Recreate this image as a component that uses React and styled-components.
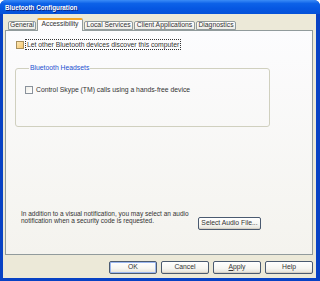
import React from 'react'
import styled, { createGlobalStyle } from 'styled-components'

const GlobalStyle = createGlobalStyle`
  html, body {
    margin: 0;
    padding: 0;
    background: #ffffff;
  }
  body {
    font-family: Tahoma, "Liberation Sans", Arial, sans-serif;
  }
`

const Window = styled.div`
  width: 320px;
  height: 281px;
  display: flex;
  flex-direction: column;
  background: #0842c4;
  border-radius: 6px 6px 0 0;
  overflow: hidden;
`

const TitleBar = styled.div`
  height: 14px;
  flex: none;
  display: flex;
  align-items: center;
  padding-left: 5px;
  background: linear-gradient(#3b8cf7 0%, #0d62e8 25%, #0657e2 60%, #0552d8 100%);
  color: #ffffff;
  font-family: "Liberation Sans", Arial, sans-serif;
  font-weight: bold;
  font-size: 6.3px;
  text-shadow: 1px 1px 0 #0a1f7a;
`

const Client = styled.div`
  flex: 1;
  margin: 0 4px 3px 3px;
  background: #ece9d8;
  padding: 4px 3px 0 2px;
  display: flex;
  flex-direction: column;
  font-size: 6.8px;
  color: #333333;
`

const TabStrip = styled.div`
  height: 12px;
  display: flex;
  align-items: flex-end;
  padding-left: 3px;
  gap: 1px;
  position: relative;
  z-index: 1;
`

const Tab = styled.div`
  box-sizing: border-box;
  height: ${p => (p.$active ? '13px' : '9px')};
  margin-bottom: ${p => (p.$active ? '-1px' : '0')};
  width: ${p => p.$w}px;
  display: flex;
  align-items: center;
  justify-content: center;
  border: 1px solid #919b9c;
  border-bottom: ${p => (p.$active ? 'none' : '1px solid #919b9c')};
  border-top: ${p => (p.$active ? '2px solid #f5a623' : '1px solid #919b9c')};
  border-radius: 2px 2px 0 0;
  background: ${p => (p.$active ? '#fcfcfe' : 'linear-gradient(#ffffff, #ecebe5)')};
  white-space: nowrap;
  line-height: 1;
  padding-bottom: ${p => (p.$active ? '2px' : '0')};
`

const Panel = styled.div`
  box-sizing: border-box;
  height: 225px;
  border: 1px solid #919b9c;
  background: linear-gradient(#fcfcfe, #f4f3ee);
  display: flex;
  flex-direction: column;
  padding: 9px 0 24px 9px;
`

const CheckRow = styled.label`
  display: flex;
  align-items: center;
  gap: 2px;
  height: 9px;
  margin-left: ${p => p.$indent || 0}px;
`

const Box = styled.span`
  box-sizing: border-box;
  width: 8px;
  height: 8px;
  flex: none;
  border: 1px solid ${p => (p.$hot ? '#a88f5c' : '#8a929c')};
  background: ${p => (p.$hot ? 'linear-gradient(135deg, #fde7b4, #f6c870)' : 'linear-gradient(135deg, #f1efe8, #ffffff)')};
`

const FocusText = styled.span`
  padding: 0 1px;
  outline: ${p => (p.$focus ? '1px dotted #333' : 'none')};
  outline-offset: 0;
  line-height: 9px;
  white-space: nowrap;
`

const Group = styled.fieldset`
  box-sizing: border-box;
  margin: 15px 0 0 0;
  width: 255px;
  height: 63px;
  padding: 13px 0 0 9px;
  border: 1px solid #d0d0bf;
  border-radius: 3px;
`

const Legend = styled.legend`
  color: #1a4fd0;
  padding: 0 1px;
  margin-left: 4px;
  font-size: 6.8px;
  line-height: 8px;
`

const Bottom = styled.div`
  margin-top: auto;
  display: flex;
  align-items: flex-start;
  padding-left: 6px;
`

const Note = styled.p`
  margin: 0;
  width: 177px;
  line-height: 7px;
  font-size: 6.5px;
`

const Button = styled.button`
  box-sizing: border-box;
  width: ${p => p.$w || 48}px;
  height: 13px;
  margin-top: ${p => p.$top || 0}px;
  padding: 0;
  border: 1px solid #4a5a70;
  border-radius: 2px;
  background: linear-gradient(#ffffff 0%, #f6f5f1 60%, #e3e1d8 100%);
  box-shadow: ${p => (p.$default ? 'inset 0 0 0 1px #9bb7ef' : 'inset 0 -1px 0 #d6d0c5')};
  font-family: inherit;
  font-size: 6.8px;
  color: #333333;
  line-height: 1;
  cursor: default;
`

const Footer = styled.div`
  flex: 1;
  display: flex;
  justify-content: flex-end;
  align-items: flex-start;
  gap: 4px;
  padding-top: 6px;
`

const tabs = [
  { label: 'General', w: 28 },
  { label: 'Accessibility', w: 46, active: true },
  { label: 'Local Services', w: 49 },
  { label: 'Client Applications', w: 61 },
  { label: 'Diagnostics', w: 40 },
]

export default function App() {
  return (
    <>
      <GlobalStyle />
      <Window>
        <TitleBar>Bluetooth Configuration</TitleBar>
        <Client>
          <TabStrip>
            {tabs.map(t => (
              <Tab key={t.label} $w={t.w} $active={t.active}>{t.label}</Tab>
            ))}
          </TabStrip>
          <Panel>
            <CheckRow $indent={1}>
              <Box $hot />
              <FocusText $focus>Let other Bluetooth devices discover this computer</FocusText>
            </CheckRow>
            <Group>
              <Legend>Bluetooth Headsets</Legend>
              <CheckRow>
                <Box />
                <FocusText>Control Skype (TM) calls using a hands-free device</FocusText>
              </CheckRow>
            </Group>
            <Bottom>
              <Note>
                In addition to a visual notification, you may select an audio
                notification when a security code is requested.
              </Note>
              <Button $w={63} $top={7}>Select Audio File...</Button>
            </Bottom>
          </Panel>
          <Footer>
            <Button $default>OK</Button>
            <Button>Cancel</Button>
            <Button><u>A</u>pply</Button>
            <Button>Help</Button>
          </Footer>
        </Client>
      </Window>
    </>
  )
}
